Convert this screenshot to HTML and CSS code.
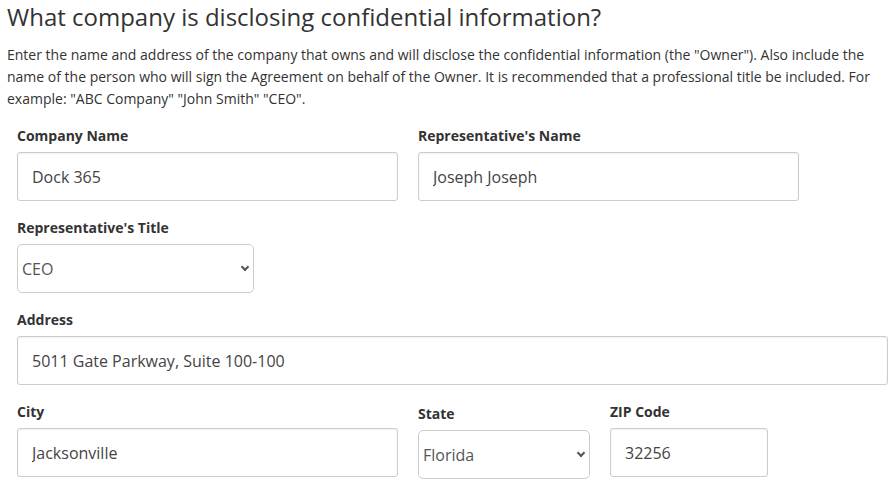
FILE: index.html
```html
<!DOCTYPE html>
<html lang="en">
<head>
    <meta charset="UTF-8">
    <meta name="viewport" content="width=device-width, initial-scale=1.0">
    <title>Disclosing Party</title>
    <link rel="stylesheet" href="styles.css">
</head>
<body>

<div class="page">
    <h2>What company is disclosing confidential information?</h2>

    <p class="intro">Enter the name and address of the company that owns and will disclose the confidential information (the "Owner"). Also include the name of the person who will sign the Agreement on behalf of the Owner. It is recommended that a professional title be included. For example: "ABC Company" "John Smith" "CEO".</p>

    <div class="form">
        <div class="row">
            <div class="field w-half">
                <label>Company Name</label>
                <input type="text" value="Dock 365">
            </div>
            <div class="field w-half">
                <label>Representative's Name</label>
                <input type="text" value="Joseph Joseph">
            </div>
        </div>

        <div class="row">
            <div class="field w-title">
                <label>Representative's Title</label>
                <div class="select">
                    <select>
                        <option>CEO</option>
                        <option>President</option>
                        <option>Owner</option>
                    </select>
                </div>
            </div>
        </div>

        <div class="row">
            <div class="field w-full">
                <label>Address</label>
                <input type="text" value="5011 Gate Parkway, Suite 100-100">
            </div>
        </div>

        <div class="row">
            <div class="field w-half">
                <label>City</label>
                <input type="text" value="Jacksonville">
            </div>
            <div class="field w-state">
                <label>State</label>
                <div class="select">
                    <select>
                        <option>Florida</option>
                        <option>Georgia</option>
                    </select>
                </div>
            </div>
            <div class="field w-zip">
                <label>ZIP Code</label>
                <input type="text" value="32256">
            </div>
        </div>
    </div>
</div>

</body>
</html>
```

FILE: styles.css
```css
body {
    margin: 0;
    font-family: "Open Sans", Arial, sans-serif;
    color: #333;
    background: #fff;
}
.page {
    padding: 0 7px;
}
h2 {
    margin: 0;
    padding-top: 1px;
    font-size: 24px;
    font-weight: 400;
    line-height: 32px;
}
.intro {
    margin: 11px 0 0;
    font-size: 14px;
    line-height: 22px;
}
.form {
    padding: 17px 0 0 10px;
}
.row {
    display: flex;
    gap: 20px;
    margin-bottom: 18px;
}
.field {
    flex: none;
}
.field label {
    display: block;
    font-size: 14px;
    font-weight: 700;
    line-height: 18px;
    margin-bottom: 7px;
}
.w-half { width: 381px; }
.w-title { width: 237px; }
.w-full { width: 871px; }
.w-state { width: 172px; margin-top: 2px; }
.w-zip { width: 158px; }

input[type="text"] {
    box-sizing: border-box;
    width: 100%;
    height: 49px;
    padding: 0 14px;
    border: 1px solid #ccc;
    border-radius: 3px;
    box-shadow: inset 0 1px 2px rgba(0,0,0,0.06);
    font-family: inherit;
    font-size: 16px;
    color: #444;
}
.select {
    position: relative;
}
.select select {
    box-sizing: border-box;
    width: 100%;
    height: 49px;
    padding: 0 24px 0 4px;
    border: 1px solid #ccc;
    border-radius: 5px;
    background: #fff;
    font-family: inherit;
    font-size: 16px;
    color: #555;
    -webkit-appearance: none;
    appearance: none;
}
.select::after {
    content: "";
    position: absolute;
    right: 6px;
    top: 20px;
    width: 4px;
    height: 4px;
    border-right: 2px solid #555;
    border-bottom: 2px solid #555;
    transform: rotate(45deg);
    pointer-events: none;
}
```
